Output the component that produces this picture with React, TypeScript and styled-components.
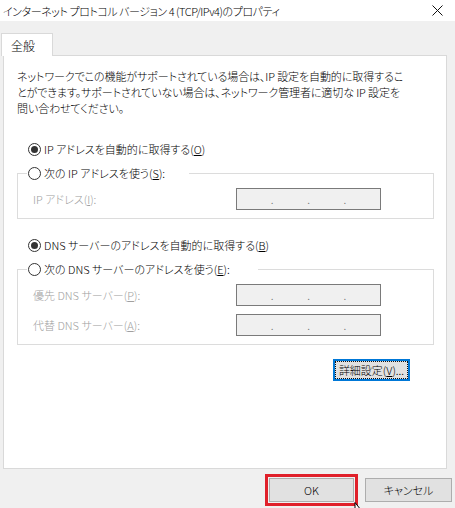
import React from "react";
import styled, { createGlobalStyle } from "styled-components";

const Global = createGlobalStyle`
  html, body { margin: 0; padding: 0; background: #f0f0f0; }
  body {
    font-family: "Noto Sans CJK JP", "Noto Sans", sans-serif;
    font-size: 11px;
    font-weight: 300;
    color: #000;
    font-feature-settings: "palt";
  }
  * { box-sizing: border-box; }
`;

const Window = styled.div`
  position: relative;
  width: 455px;
  height: 508px;
  background: #f0f0f0;
  display: flex;
  flex-direction: column;
  overflow: hidden;
`;

const TitleBar = styled.div`
  height: 21px;
  background: #fff;
  display: flex;
  align-items: center;
  justify-content: space-between;
  padding: 0 12px 0 3px;
  line-height: 16px;
  font-size: 11px;
  letter-spacing: -0.45px;
  white-space: nowrap;
`;

const CloseIcon = () => (
  <svg width="11" height="11" viewBox="0 0 11 11">
    <path d="M0.5 0.5 L10.5 10.5 M10.5 0.5 L0.5 10.5" stroke="#111" strokeWidth="1" fill="none" />
  </svg>
);

const Body = styled.div`
  display: flex;
  flex-direction: column;
  padding: 12px 8px 0 1px;
`;

const Tab = styled.div`
  position: relative;
  z-index: 1;
  width: 52px;
  height: 23px;
  margin-bottom: -1px;
  padding: 4px 0 0 9px;
  background: #fff;
  border: 1px solid #d9d9d9;
  border-bottom: none;
  line-height: 16px;
  font-size: 12px;
`;

const Panel = styled.div`
  margin-left: 2px;
  height: 414px;
  background: #fff;
  border: 1px solid #d9d9d9;
  padding: 12px 12px 0 13px;
  display: flex;
  flex-direction: column;
`;

const Description = styled.p`
  margin: 0;
  line-height: 16px;
  white-space: nowrap;
  letter-spacing: -0.1px;
`;

const RadioRow = styled.label<{ $mt: number }>`
  display: flex;
  align-items: center;
  gap: 3px;
  height: 16px;
  line-height: 16px;
  margin-top: ${(p) => p.$mt}px;
  padding-left: 11px;
  white-space: nowrap;
`;

const RadioCircle = styled.span<{ $checked?: boolean }>`
  width: 13px;
  height: 13px;
  border-radius: 50%;
  border: 1px solid #333;
  background: #fff;
  display: inline-flex;
  align-items: center;
  justify-content: center;
  flex: none;
  &::after {
    content: "";
    width: 7px;
    height: 7px;
    border-radius: 50%;
    background: ${(p) => (p.$checked ? "#333" : "transparent")};
  }
`;

const GroupBox = styled.fieldset<{ $mt: number }>`
  margin: ${(p) => p.$mt}px 0 0 0;
  padding: 7px 0 8px 0;
  border: 1px solid #dcdcdc;
  min-width: 0;
  display: flex;
  flex-direction: column;
  gap: 8px;
`;

const Legend = styled.legend<{ $gap: number }>`
  margin-left: 9px;
  padding: 0 ${(p) => p.$gap}px 0 1px;
  height: 16px;
  line-height: 16px;
  display: flex;
  align-items: center;
  gap: 3px;
  white-space: nowrap;
`;

const FieldRow = styled.div`
  display: grid;
  grid-template-columns: 203px 145px;
  align-items: center;
  padding-left: 15px;
  color: #a0a0a0;
  white-space: nowrap;
`;

const IpBox = styled.div`
  width: 145px;
  height: 22px;
  border: 1px solid #7a7a7a;
  background: #f0f0f0;
  display: flex;
  justify-content: space-evenly;
  align-items: center;
  color: #777;
  font-size: 11px;
  line-height: 16px;
`;

const Key = styled.u`
  text-decoration: underline;
  text-underline-offset: 1px;
`;

const ButtonRow = styled.div`
  display: flex;
  justify-content: flex-end;
  padding-right: 24px;
  margin-top: 14px;
`;

const Button = styled.button<{ $w: number; $focused?: boolean }>`
  width: ${(p) => p.$w}px;
  height: 22px;
  padding: 0;
  font: inherit;
  color: #000;
  background: #e1e1e1;
  border: 1px solid ${(p) => (p.$focused ? "#0078d7" : "#adadad")};
  box-shadow: ${(p) => (p.$focused ? "inset 0 0 0 1px #0078d7" : "none")};
  outline: ${(p) => (p.$focused ? "1px dotted #111" : "none")};
  outline-offset: -3px;
  line-height: 16px;
  white-space: nowrap;
`;

const Footer = styled.div`
  display: flex;
  justify-content: flex-end;
  align-items: center;
  gap: 7px;
  padding-right: 3px;
  margin-top: 5px;
`;

const Highlight = styled.div`
  border: 3px solid #e0202a;
  padding: 1px;
  display: flex;
`;

const FooterButton = styled(Button)`
  height: 24px;
`;

const Cursor = styled.svg`
  position: absolute;
  left: 354px;
  top: 502px;
`;

const IpField = () => (
  <IpBox>
    <span>.</span>
    <span>.</span>
    <span>.</span>
  </IpBox>
);

export default function App() {
  return (
    <Window>
      <Global />
      <TitleBar>
        <span>インターネット プロトコル バージョン 4 (TCP/IPv4)のプロパティ</span>
        <CloseIcon />
      </TitleBar>
      <Body>
        <Tab>全般</Tab>
        <Panel>
          <Description>
            ネットワークでこの機能がサポートされている場合は、IP 設定を自動的に取得するこ
            <br />
            とができます。サポートされていない場合は、ネットワーク管理者に適切な IP 設定を
            <br />
            問い合わせてください。
          </Description>

          <RadioRow $mt={25}>
            <RadioCircle $checked />
            <span>
              IP アドレスを自動的に取得する(<Key>O</Key>)
            </span>
          </RadioRow>
          <GroupBox $mt={8}>
            <Legend $gap={24}>
              <RadioCircle />
              <span>
                次の IP アドレスを使う(<Key>S</Key>):
              </span>
            </Legend>
            <FieldRow>
              <span>
                IP アドレス(<Key>I</Key>):
              </span>
              <IpField />
            </FieldRow>
          </GroupBox>

          <RadioRow $mt={18}>
            <RadioCircle $checked />
            <span>
              DNS サーバーのアドレスを自動的に取得する(<Key>B</Key>)
            </span>
          </RadioRow>
          <GroupBox $mt={8}>
            <Legend $gap={28}>
              <RadioCircle />
              <span>
                次の DNS サーバーのアドレスを使う(<Key>E</Key>):
              </span>
            </Legend>
            <FieldRow>
              <span>
                優先 DNS サーバー(<Key>P</Key>):
              </span>
              <IpField />
            </FieldRow>
            <FieldRow>
              <span>
                代替 DNS サーバー(<Key>A</Key>):
              </span>
              <IpField />
            </FieldRow>
          </GroupBox>

          <ButtonRow>
            <Button $w={77} $focused>
              詳細設定(<Key>V</Key>)...
            </Button>
          </ButtonRow>
        </Panel>
      </Body>
      <Footer>
        <Highlight>
          <FooterButton $w={85}>OK</FooterButton>
        </Highlight>
        <FooterButton $w={87}>キャンセル</FooterButton>
      </Footer>
      <Cursor width="8" height="8" viewBox="0 0 8 8">
        <path d="M1 0.5 L1 8 L7 8 Z" fill="#fff" stroke="#000" strokeWidth="1" />
      </Cursor>
    </Window>
  );
}
